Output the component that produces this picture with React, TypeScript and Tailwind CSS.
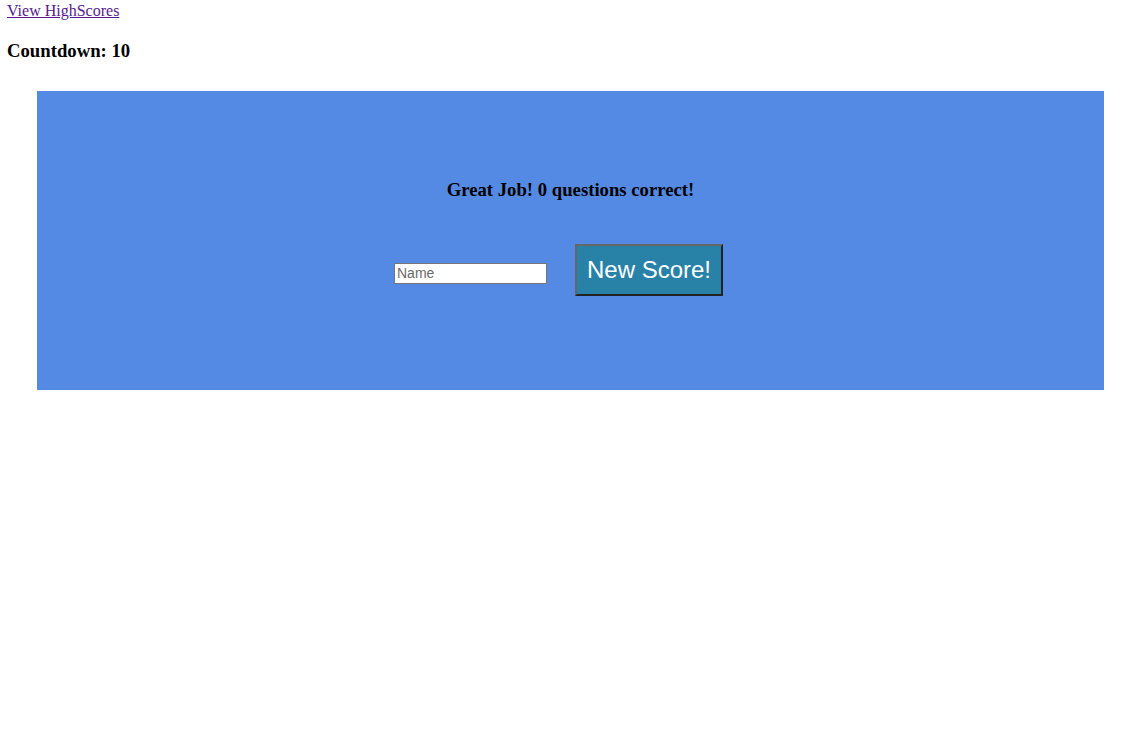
export default function App() {
  return (
    <div className="min-h-[741px] bg-white pl-[7px] font-['Liberation_Serif',serif] text-black">
      <a href="#" className="block w-fit text-[16px] leading-[21px] text-[#551a8b] underline">
        View HighScores
      </a>
      <h3 className="mt-[19px] text-[18.72px] font-bold leading-[22px]">Countdown: 10</h3>

      <div className="ml-[30px] mt-[29px] h-[299px] w-[1067px] bg-[#548ae4] pt-[88px]">
        <h3 className="text-center text-[18.72px] font-bold leading-[22px]">
          Great Job! 0 questions correct!
        </h3>
        <div className="mt-[43px] flex items-end justify-center pr-[24px]">
          <input
            type="text"
            placeholder="Name"
            className="mb-[12px] h-[21px] w-[153px] border border-[#767676] bg-white px-[2px] font-['Liberation_Sans',sans-serif] text-[14px] text-black placeholder:text-[#6b6b6b]"
          />
          <button className="ml-[28px] h-[52px] w-[148px] border-2 border-b-[#222] border-l-[#666] border-r-[#222] border-t-[#666] bg-[#2882a8] font-['Liberation_Sans',sans-serif] text-[24px] text-white">
            New Score!
          </button>
        </div>
      </div>
    </div>
  )
}
